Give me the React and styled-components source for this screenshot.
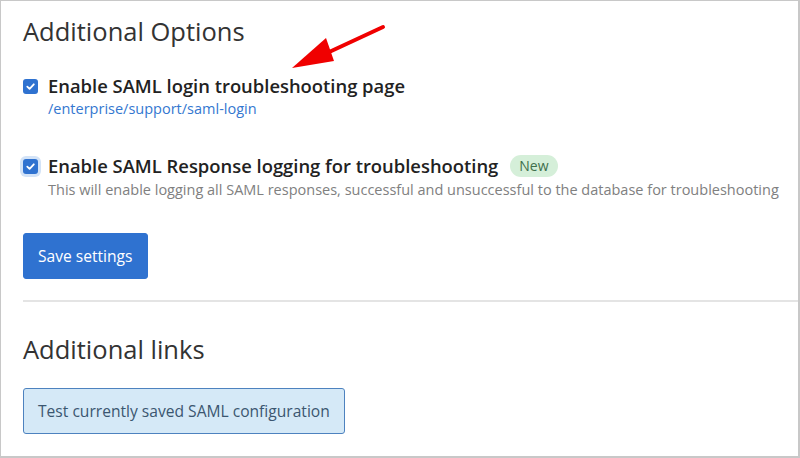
import React from "react";
import styled, { createGlobalStyle } from "styled-components";

const GlobalStyle = createGlobalStyle`
  html, body {
    margin: 0;
    padding: 0;
    background: #ffffff;
  }
  body {
    font-family: "Open Sans", "Noto Sans", sans-serif;
    color: #222;
  }
`;

const Frame = styled.div`
  position: relative;
  box-sizing: border-box;
  width: 800px;
  height: 458px;
  border: 1px solid #c8c8c8;
  border-right-width: 2px;
  border-bottom-width: 2px;
  overflow: hidden;
  padding: 12px 0 0 22px;
`;

const SectionTitle = styled.h2`
  margin: 0;
  font-size: 25.5px;
  font-weight: 400;
  color: #333;
  line-height: 36px;
`;

const OptionList = styled.div`
  display: flex;
  flex-direction: column;
  gap: 35px;
  margin-top: 25px;
`;

const Option = styled.div`
  display: grid;
  grid-template-columns: 25px 1fr;
  align-items: start;
`;

const Check = styled.span`
  box-sizing: border-box;
  width: 15px;
  height: 15px;
  margin-top: 5px;
  border-radius: 3px;
  background: #2f72d0;
  display: flex;
  align-items: center;
  justify-content: center;
  box-shadow: ${(p) => (p.focused ? "0 0 0 3px #d3e3f7" : "none")};
`;

const LabelRow = styled.div`
  display: flex;
  align-items: center;
  gap: 12px;
  font-size: 18.4px;
  font-weight: 600;
  color: #222;
  line-height: 24px;
`;

const Badge = styled.span`
  font-size: 14px;
  font-weight: 400;
  color: #3f6f4c;
  background: #d5efd9;
  border-radius: 11px;
  padding: 0 9px;
  line-height: 22px;
`;

const PathLink = styled.a`
  display: block;
  font-size: 14.5px;
  color: #3477d0;
  text-decoration: none;
  line-height: 20px;
  margin-top: 1px;
`;

const Help = styled.div`
  font-size: 14.5px;
  color: #808080;
  line-height: 20px;
  margin-top: 2px;
`;

const Button = styled.button`
  box-sizing: border-box;
  font-family: inherit;
  font-size: 15.6px;
  height: 46px;
  padding: 0 14px;
  border-radius: 3px;
  cursor: pointer;
  background: ${(p) => (p.light ? "#d5e9f7" : "#2f72d0")};
  color: ${(p) => (p.light ? "#3b5670" : "#ffffff")};
  border: 1px solid ${(p) => (p.light ? "#4d82bf" : "#2f72d0")};
`;

const Actions = styled.div`
  margin-top: 33px;
`;

const Divider = styled.hr`
  border: none;
  border-top: 2px solid #e4e4e4;
  margin: 21px 0 0 0;
`;

const LinksSection = styled.div`
  padding-top: 29px;
  display: flex;
  flex-direction: column;
  align-items: flex-start;
  gap: 21px;
`;

const Arrow = styled.svg`
  position: absolute;
  left: 280px;
  top: 14px;
`;

const CheckMark = () => (
  <svg width="11" height="11" viewBox="0 0 12 12">
    <path d="M2.5 6.2 L5 8.6 L9.6 3.6" fill="none" stroke="#fff" strokeWidth="2" strokeLinecap="round" strokeLinejoin="round" />
  </svg>
);

const App = () => (
  <>
    <GlobalStyle />
    <Frame>
      <SectionTitle>Additional Options</SectionTitle>
      <OptionList>
        <Option>
          <Check>
            <CheckMark />
          </Check>
          <div>
            <LabelRow>Enable SAML login troubleshooting page</LabelRow>
            <PathLink href="#">/enterprise/support/saml-login</PathLink>
          </div>
        </Option>
        <Option>
          <Check focused>
            <CheckMark />
          </Check>
          <div>
            <LabelRow>
              Enable SAML Response logging for troubleshooting
              <Badge>New</Badge>
            </LabelRow>
            <Help>
              This will enable logging all SAML responses, successful and unsuccessful to the database for troubleshooting
            </Help>
          </div>
        </Option>
      </OptionList>
      <Actions>
        <Button>Save settings</Button>
      </Actions>
      <Divider />
      <LinksSection>
        <SectionTitle>Additional links</SectionTitle>
        <Button light>Test currently saved SAML configuration</Button>
      </LinksSection>
      <Arrow width="110" height="60" viewBox="0 0 110 60">
        <path d="M102 12 L46 38" stroke="#f00000" strokeWidth="4" strokeLinecap="round" />
        <path d="M11 53 L45 23 L53 46 Z" fill="#f00000" />
      </Arrow>
    </Frame>
  </>
);

export default App;
